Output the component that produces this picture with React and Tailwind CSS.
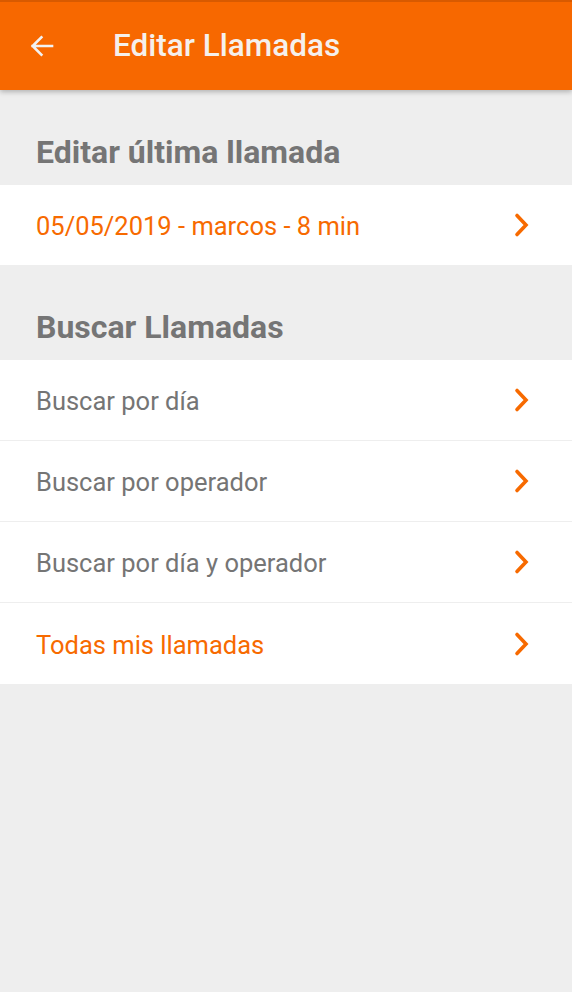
import React from 'react';

const ORANGE = '#f76a00';

function Chevron() {
  return (
    <svg width="18" height="26" viewBox="0 0 18 26" fill="none" className="shrink-0">
      <path d="M4 3.5 L13 13 L4 22.5" stroke={ORANGE} strokeWidth="3.6" strokeLinecap="round" strokeLinejoin="miter" />
    </svg>
  );
}

function Row({ label, accent, last }) {
  return (
    <div className={`${last ? 'h-[81px]' : 'h-[80px]'} bg-white flex items-center justify-between pl-[36px] pr-[41px]`}>
      <span className={`pt-[3px] text-[25.5px] ${accent ? 'text-[#f76a00]' : 'text-[#757575]'}`}>{label}</span>
      <Chevron />
    </div>
  );
}

export default function App() {
  const search = [
    { label: 'Buscar por día' },
    { label: 'Buscar por operador' },
    { label: 'Buscar por día y operador' },
    { label: 'Todas mis llamadas', accent: true },
  ];

  return (
    <div className="w-[572px] h-[992px] bg-[#eeeeee] font-['Roboto',sans-serif] overflow-hidden">
      {/* Toolbar */}
      <div className="relative h-[90px] bg-[#f76800] border-t-2 border-[#d85a00] flex items-center shadow-[0_2px_5px_rgba(0,0,0,0.25)]">
        <svg width="30" height="30" viewBox="0 0 24 24" className="ml-[27px]" fill="none">
          <path d="M20 12H4.5M11.5 5L4.5 12l7 7" stroke="#f2f2f2" strokeWidth="2.1" strokeLinecap="square" />
        </svg>
        <h1 className="ml-[56px] text-[31.5px] text-[#f5f0ec] font-medium">Editar Llamadas</h1>
      </div>

      {/* Última llamada */}
      <div className="h-[95px] flex items-center pl-[36px] pt-[29px]">
        <h2 className="text-[32px] font-bold text-[#757575]">Editar última llamada</h2>
      </div>
      <Row label="05/05/2019 - marcos - 8 min" accent />

      {/* Buscar */}
      <div className="h-[95px] flex items-center pl-[36px] pt-[28px]">
        <h2 className="text-[32px] font-bold text-[#757575]">Buscar Llamadas</h2>
      </div>
      <div className="flex flex-col gap-px">
        {search.map((s, i) => (
          <Row key={s.label} label={s.label} accent={s.accent} last={i === search.length - 1} />
        ))}
      </div>
    </div>
  );
}
